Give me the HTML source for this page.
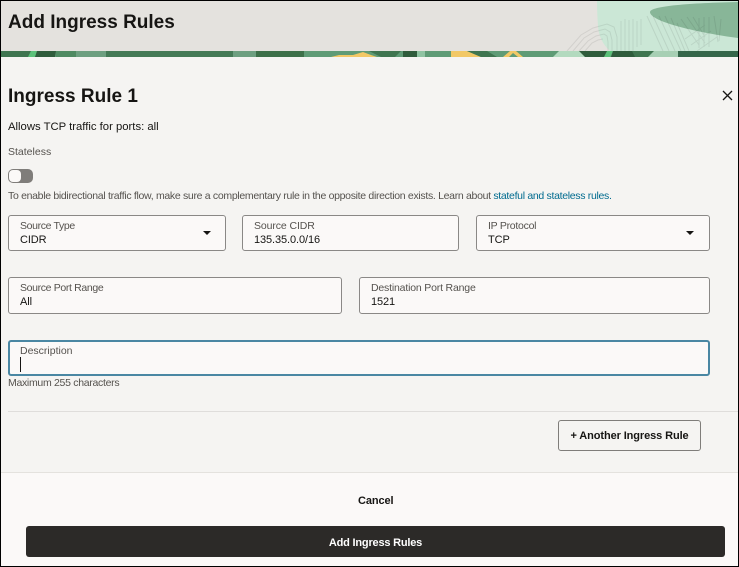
<!DOCTYPE html>
<html><head><meta charset="utf-8"><style>
*{box-sizing:border-box}
html,body{margin:0;padding:0}
body{width:739px;height:567px;position:relative;overflow:hidden;background:#000;font-family:"Liberation Sans",sans-serif;color:#161513}
.a{position:absolute}
.t{position:absolute;white-space:nowrap;line-height:1}
.f{position:absolute;background:#fbf9f8;border:1px solid #8a8886;border-radius:3px}
.l{position:absolute;left:11px;top:4px;font-size:10.5px;line-height:12px;color:#55524e;white-space:nowrap}
.v{position:absolute;left:11px;top:18px;font-size:11px;line-height:13px;color:#161513;white-space:nowrap;letter-spacing:-.1px}
.c{position:absolute;width:0;height:0;border-left:4px solid transparent;border-right:4px solid transparent;border-top:4px solid #161513}
</style></head><body>
<div class="a" style="left:1px;top:1px;width:737px;height:565px;background:#f5f4f2;overflow:hidden">
<svg class="a" style="left:0;top:0" width="737" height="56" viewBox="0 0 737 56">
<rect width="737" height="50" fill="#e4e2de"/>
<path d="M596 0h141v50H609q-11-10-12-25-1-14-1-25z" fill="#cbe7d6"/>
<path d="M737 1C690 2 649 5 649 11 649 21 699 32 737 37z" fill="#88b698"/>
<g fill="none" stroke="#000" stroke-opacity=".08" stroke-width="1">
<path d="M566 50l14-16 12-7 14-4 7 3 3 10v14M572 50l11-13 10-6 11-3 5 3 2 8v11M578 50l9-10 8-5 8-2 3 2 1 6v9M584 50l7-8 6-3 5-1"/>
<path d="M620 20v30M624 18v32M628 19v31M632 18v32M636 20v26M640 18l0 26M646 15l16 35M652 15l16 35M658 15l16 35M664 15l16 35M670 17l14 33M676 22l12 28M680 18l18 26M686 16l18 26M692 16l12 20M698 17v30M703 16v30M708 16v30M713 15l4 26M720 18l-2 22M684 38l20-14M690 44l20-14M696 50l20-14"/>
</g>
<rect y="50" width="737" height="6" fill="#5f9b76"/>
<rect x="0" y="50" width="30" height="6" fill="#3f7550"/>
<path d="M30 50h7l-3 6h-7z" fill="#5cc17a"/>
<path d="M36 50h19l-1 6H34z" fill="#2f5c3c"/>
<rect x="55" y="50" width="20" height="6" fill="#4f8a62"/>
<rect x="75" y="50" width="30" height="6" fill="#6d9f80"/>
<rect x="105" y="50" width="127" height="6" fill="#447a56"/>
<rect x="232" y="50" width="23" height="6" fill="#6d9f80"/>
<rect x="255" y="50" width="48" height="6" fill="#3d7049"/>
<path d="M330 56l8-2 14 0 10-3 8 3 6 2z" fill="#f2c866"/>
<path d="M368 50h32l-6 6h-14z" fill="#3f7550"/>
<rect x="402" y="50" width="14" height="6" fill="#2f5c3c"/>
<rect x="416" y="50" width="8" height="6" fill="#8fc3a2"/>
<path d="M450 50h16l14 6h-30z" fill="#f2c866"/>
<path d="M466 50h20l10 6h-16z" fill="#3f7550"/>
<path d="M502 56l7-6h6l7 6h-5l-5-4-4 4z" fill="#f2c866"/>
<path d="M552 56l6-6h40l-2 6z" fill="#b3dabf"/>
<path d="M578 50h29l-3 6h-20z" fill="#2f5c3c"/>
<path d="M606 50h6l-3 6h-6z" fill="#5cc17a"/>
<path d="M612 50h20l3 6h-25z" fill="#2f5c3c"/>
<path d="M631 50h26l-10 6h-13z" fill="#3f7550"/>
<path d="M647 56l6-6h24l1 6z" fill="#a7cfb4"/>
<rect x="677" y="50" width="60" height="6" fill="#35664a"/>
</svg>
<div class="t" style="left:7px;top:10px;font-size:19px;font-weight:700;line-height:24px">Add Ingress Rules</div>
<div class="t" style="left:7px;top:84px;font-size:19px;font-weight:700;line-height:24px">Ingress Rule 1</div>
<svg class="a" style="left:721px;top:89px" width="11" height="11" viewBox="0 0 11 11"><path d="M1 1l9 9M10 1l-9 9" stroke="#161513" stroke-width="1.3" fill="none"/></svg>
<div class="t" style="left:7px;top:120px;font-size:11.3px;line-height:13px">Allows TCP traffic for ports: all</div>
<div class="t" style="left:7px;top:145px;font-size:10.5px;line-height:12px;color:#55524e">Stateless</div>
<div class="a" style="left:7px;top:168px;width:25px;height:14px;border-radius:5px;background:#7f7d7a"></div>
<div class="a" style="left:8px;top:169px;width:12px;height:12px;border-radius:4px;background:#fbf9f8"></div>
<div class="t" style="left:7px;top:189px;font-size:10.5px;line-height:12px;color:#55524e;letter-spacing:-.31px">To enable bidirectional traffic flow, make sure a complementary rule in the opposite direction exists. Learn about <span style="color:#006b8f">stateful and stateless rules.</span></div>
<div class="f" style="left:7px;top:214px;width:218px;height:36px"><div class="l" style="letter-spacing:-.36px">Source Type</div><div class="v">CIDR</div><div class="c" style="left:194px;top:15px"></div></div>
<div class="f" style="left:241px;top:214px;width:217px;height:36px"><div class="l" style="letter-spacing:-.1px">Source CIDR</div><div class="v">135.35.0.0/16</div></div>
<div class="f" style="left:475px;top:214px;width:234px;height:36px"><div class="l" style="letter-spacing:-.27px">IP Protocol</div><div class="v">TCP</div><div class="c" style="left:209px;top:15px"></div></div>
<div class="f" style="left:7px;top:276px;width:334px;height:37px"><div class="l" style="letter-spacing:-.35px">Source Port Range</div><div class="v">All</div></div>
<div class="f" style="left:358px;top:276px;width:351px;height:37px"><div class="l" style="letter-spacing:-.18px">Destination Port Range</div><div class="v">1521</div></div>
<div class="f" style="left:7px;top:339px;width:702px;height:36px;border:2px solid #4a87a3"><div class="l" style="left:10px;top:3px">Description</div><div class="a" style="left:10px;top:15px;width:1px;height:15px;background:#161513"></div></div>
<div class="t" style="left:7px;top:376px;font-size:10.5px;line-height:12px;color:#55524e;letter-spacing:-.3px">Maximum 255 characters</div>
<div class="a" style="left:7px;top:410px;width:730px;height:1px;background:#dfdddb"></div>
<div class="a" style="left:557px;top:419px;width:143px;height:31px;background:#f5f4f2;border:1px solid #7f7d7a;border-radius:3px;font-size:11px;font-weight:700;line-height:31px;text-align:center;white-space:nowrap;letter-spacing:-.1px">+ Another Ingress Rule</div>
<div class="a" style="left:0;top:471px;width:737px;height:94px;background:#fbf9f8;border-top:1px solid #e4e2de"></div>
<div class="t" style="left:357px;top:494px;font-size:11px;font-weight:700;line-height:13px;letter-spacing:-.1px">Cancel</div>
<div class="a" style="left:25px;top:525px;width:699px;height:31px;background:#2c2a28;border-radius:3px;color:#fff;font-size:11px;font-weight:700;line-height:34px;text-align:center;letter-spacing:-.2px">Add Ingress Rules</div>
</div>
</body></html>
